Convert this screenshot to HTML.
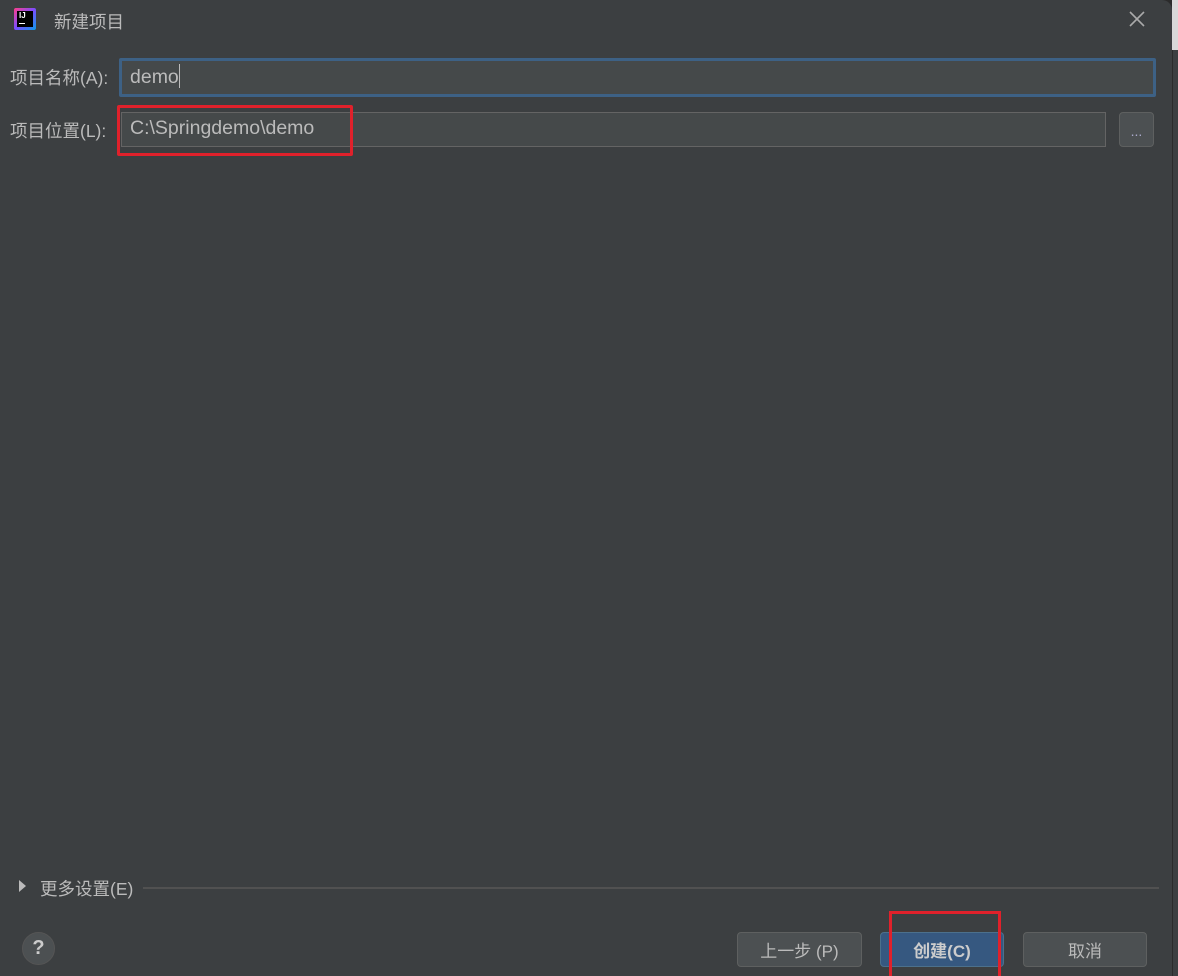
<!DOCTYPE html>
<html><head><meta charset="utf-8"><style>
html,body{margin:0;width:1178px;height:976px;overflow:hidden}
body{background:#2b2b2b;font-family:"Liberation Sans","Noto Sans CJK SC",sans-serif;color:#bbbbbb;position:relative}
.win{position:absolute;left:0;top:0;width:1172px;height:976px;background:#3c3f41;border-top-right-radius:10px;overflow:hidden}
.a{position:absolute}
.lbl{font-size:17.5px;color:#bbb}
.btn{position:absolute;top:932px;height:35px;border:1px solid #5e6060;border-radius:4px;background:#4c5052;color:#bbb;font-size:17px;display:flex;align-items:center;justify-content:center;box-sizing:border-box}
</style></head><body>
<div class="a" style="left:1172px;top:0;width:6px;height:50px;background:#d8d8d8"></div>
<div class="a" style="left:1173px;top:50px;width:5px;height:926px;background:#3c3f41"></div>
<div class="win">
<div class="a" style="left:14px;top:8px;width:22px;height:22px;background:linear-gradient(135deg,#ff3e8a,#7a4dff,#0a9be8);border-radius:2px"></div>
<div class="a" style="left:17px;top:11px;width:16px;height:16px;background:#000;color:#fff;font-size:8px;font-weight:bold;line-height:9px;padding-left:2px;box-sizing:border-box">IJ<div style="width:6px;height:1px;background:#fff;margin-top:3px"></div></div>
<div class="a" style="left:54px;top:9px;font-size:17.5px;color:#bbb">新建项目</div>
<svg class="a" style="left:1129px;top:11px" width="16" height="16"><path d="M1 1L15 15M15 1L1 15" stroke="#aaa" stroke-width="1.6"/></svg>
<div class="a lbl" style="left:10px;top:65px">项目名称(A):</div>
<div class="a" style="left:119px;top:58px;width:1037px;height:39px;box-sizing:border-box;border:3px solid #3d6185;background:#45494a;border-radius:2px"></div>
<div class="a" style="left:130px;top:64px;font-size:19.5px;color:#bbb">demo<span style="display:inline-block;width:1px;height:24px;background:#bbb;vertical-align:-5px"></span></div>
<div class="a lbl" style="left:10px;top:118px">项目位置(L):</div>
<div class="a" style="left:121px;top:112px;width:985px;height:35px;box-sizing:border-box;border:1px solid #646464;background:#45494a"></div>
<div class="a" style="left:130px;top:117px;font-size:19.5px;color:#bbb">C:\Springdemo\demo</div>
<div class="a" style="left:117px;top:105px;width:236px;height:51px;box-sizing:border-box;border:3px solid #e0212b;border-radius:2px"></div>
<div class="a" style="left:1119px;top:112px;width:35px;height:35px;box-sizing:border-box;border:1px solid #5e6060;border-radius:4px;background:#4c5052;color:#aac;font-size:14px;text-align:center;line-height:36px">...</div>
<svg class="a" style="left:18px;top:879px" width="10" height="14"><path d="M1 1L8 7L1 13Z" fill="#bbb"/></svg>
<div class="a lbl" style="left:40px;top:876px">更多设置(E)</div>
<div class="a" style="left:143px;top:887px;width:1016px;height:2px;background:#515151"></div>
<div class="a" style="left:22px;top:932px;width:33px;height:33px;border-radius:50%;background:#4c5052;border:1px solid #555;box-sizing:border-box;text-align:center;line-height:31px;font-weight:bold;font-size:20px;color:#ccc">?</div>
<div class="btn" style="left:737px;width:125px">上一步 (P)</div>
<div class="btn" style="left:880px;width:124px;background:#365880;border-color:#4c708c;font-weight:bold;color:#ccc">创建(C)</div>
<div class="btn" style="left:1023px;width:124px">取消</div>
<div class="a" style="left:889px;top:911px;width:112px;height:65px;box-sizing:border-box;border:3px solid #e0212b;border-bottom:none"></div>
</div>
</body></html>
